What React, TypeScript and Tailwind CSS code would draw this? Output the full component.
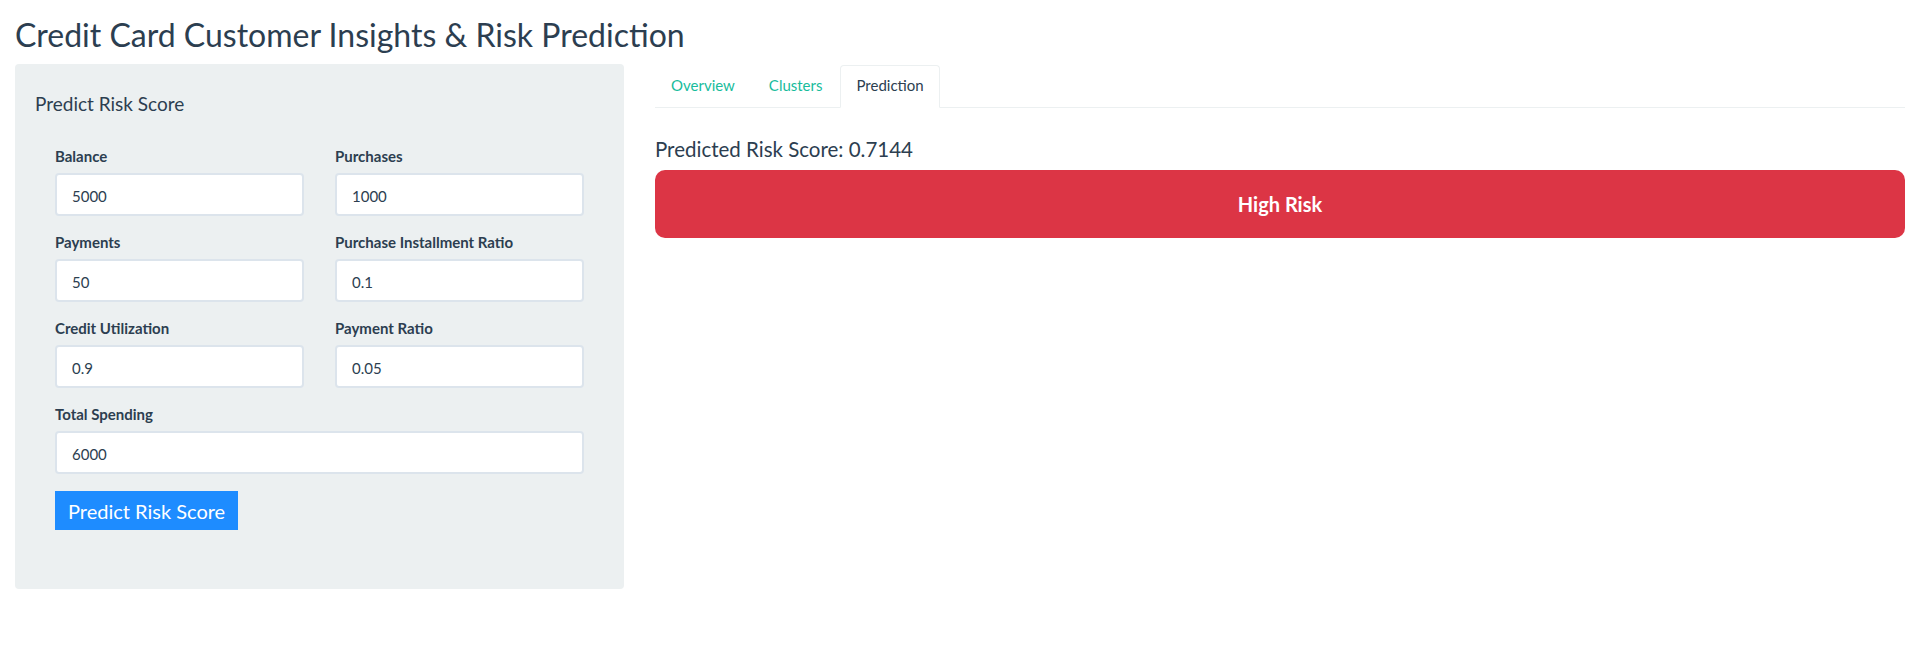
import React from "react";

const fields: { label: string; value: string }[] = [
  { label: "Balance", value: "5000" },
  { label: "Purchases", value: "1000" },
  { label: "Payments", value: "50" },
  { label: "Purchase Installment Ratio", value: "0.1" },
  { label: "Credit Utilization", value: "0.9" },
  { label: "Payment Ratio", value: "0.05" },
];

function Field({ label, value, full }: { label: string; value: string; full?: boolean }) {
  return (
    <div className={full ? "col-span-2 mb-[16px]" : "mb-[16px]"}>
      <label className="block text-[15px] leading-[21px] font-bold text-[#2c3e50] mb-[6px]">{label}</label>
      <input
        readOnly
        value={value}
        className="block w-full h-[43px] border-2 border-[#dce4ec] rounded-[4px] bg-white px-[15px] pt-[2px] text-[15px] text-[#2c3e50] outline-none"
        style={{ fontFamily: "Lato, 'Liberation Sans', sans-serif" }}
      />
    </div>
  );
}

export default function App() {
  return (
    <div
      className="min-h-screen bg-white pl-[15px] pr-[7px] text-[#2c3e50]"
      style={{ fontFamily: "Lato, 'Liberation Sans', sans-serif" }}
    >
      <h2 className="pt-[17px] mb-[12px] text-[32px] leading-[35px] font-normal text-[#2c3e50]">
        Credit Card Customer Insights &amp; Risk Prediction
      </h2>
      <div className="flex gap-[31px]">
        <div className="w-[609px] h-[525px] shrink-0 bg-[#ecf0f1] rounded-[4px] px-[20px] pt-[29px]">
          <h4 className="text-[19px] leading-[21px] font-normal text-[#2c3e50] mb-[32px]">Predict Risk Score</h4>
          <div className="px-[20px]">
            <div className="grid grid-cols-2 gap-x-[31px]">
              {fields.map((f) => (
                <Field key={f.label} label={f.label} value={f.value} />
              ))}
              <Field label="Total Spending" value="6000" full />
            </div>
            <button className="mt-[1px] h-[39px] px-[13px] bg-[#1e8cff] text-white text-[20px] leading-[24px]">
              Predict Risk Score
            </button>
          </div>
        </div>
        <div className="flex-1 pt-[1px]">
          <ul className="flex border-b border-[#ecf0f1]">
            <li className="-mb-px mr-[2px]">
              <span className="block px-[15px] pt-[9px] pb-[11px] leading-[21px] text-[15px] text-[#18bc9c] border border-transparent rounded-t-[4px]">
                Overview
              </span>
            </li>
            <li className="-mb-px mr-[2px]">
              <span className="block px-[15px] pt-[9px] pb-[11px] leading-[21px] text-[15px] text-[#18bc9c] border border-transparent rounded-t-[4px]">
                Clusters
              </span>
            </li>
            <li className="-mb-px mr-[2px]">
              <span className="block px-[15px] pt-[9px] pb-[11px] leading-[21px] text-[15px] text-[#2c3e50] bg-white border border-[#ecf0f1] border-b-white rounded-t-[4px]">
                Prediction
              </span>
            </li>
          </ul>
          <div className="pt-[30px]">
            <div className="text-[20.5px] leading-[22px] text-[#2c3e50]">Predicted Risk Score: 0.7144</div>
            <div className="mt-[10px] h-[68px] rounded-[10px] bg-[#dc3545] flex items-center justify-center text-white text-[20px] font-bold">
              High Risk
            </div>
          </div>
        </div>
      </div>
    </div>
  );
}
